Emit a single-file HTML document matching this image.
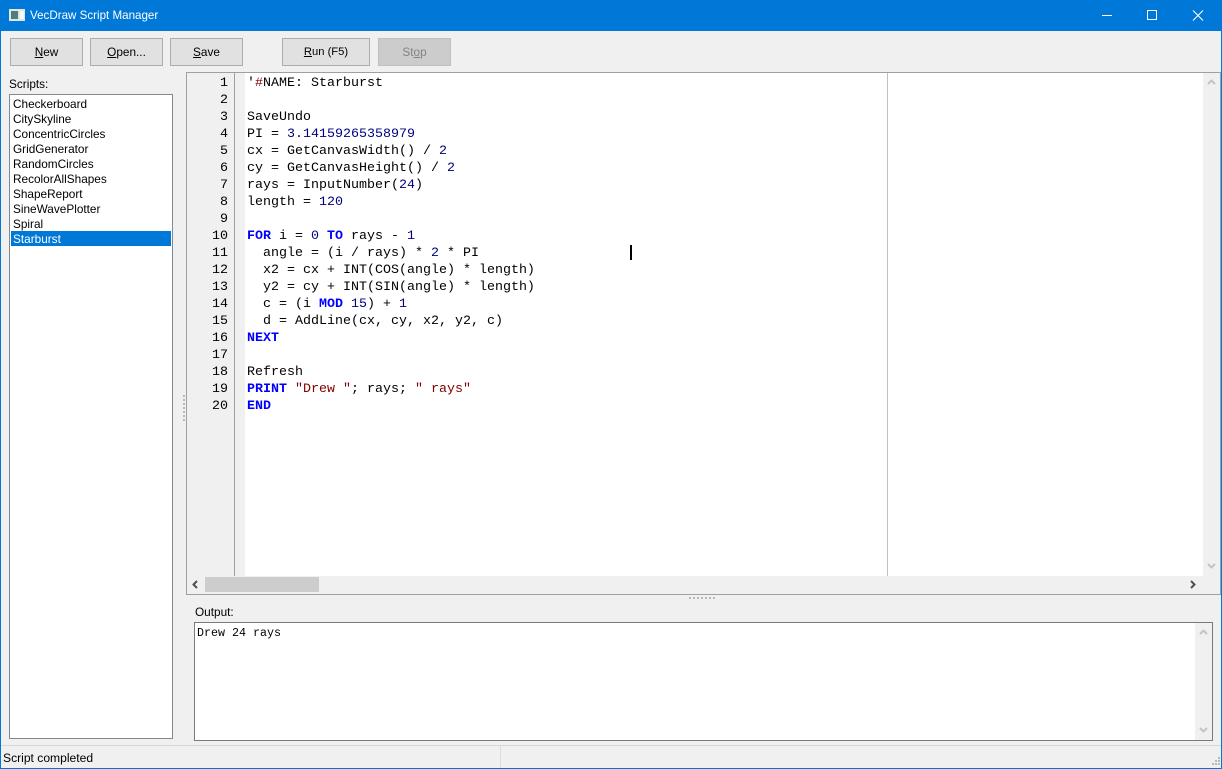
<!DOCTYPE html>
<html><head><meta charset="utf-8"><title>VecDraw Script Manager</title>
<style>
html,body{margin:0;padding:0;background:#f0f0f0;}
body{width:1222px;height:769px;position:relative;overflow:hidden;font-family:"Liberation Sans",sans-serif;font-size:12px;color:#000;}
.a{position:absolute;}
.t{position:absolute;white-space:pre;line-height:15px;}
.btn{position:absolute;top:38px;height:26px;border:1px solid #adadad;background:#e1e1e1;text-align:center;line-height:26px;font-size:11.8px;box-sizing:content-box;}
.btn u{text-decoration:underline;}
.code{position:absolute;white-space:pre;font-family:"Liberation Mono",monospace;font-size:13.33px;line-height:17px;}
.k{color:#0000ff;font-weight:bold}.n{color:#000080}.s{color:#800000}.c{color:#800000}
.ln{position:absolute;left:187px;width:41px;text-align:right;white-space:pre;font-family:"Liberation Mono",monospace;font-size:13.33px;line-height:17px;}
.li{position:absolute;left:13px;line-height:15px;font-size:11.8px;white-space:pre;}
</style></head><body>
<div class="a" style="left:0;top:0;width:1222px;height:31px;background:#0078d7"></div>
<div class="a" style="left:0;top:0;width:1px;height:769px;background:#0078d7"></div>
<div class="a" style="left:1221px;top:0;width:1px;height:769px;background:#0078d7"></div>
<div class="a" style="left:0;top:768px;width:1222px;height:1px;background:#0078d7"></div>
<svg class="a" style="left:9px;top:9px" width="16" height="12"><rect x="0" y="0" width="16" height="12" fill="#dfe6e6"/><rect x="2" y="2" width="7" height="8" fill="#4f7f78"/><rect x="11" y="2" width="4" height="8" fill="#f8f8f8"/></svg>
<div class="t" style="left:30px;top:8px;color:#fff;font-size:11.6px">VecDraw Script Manager</div>
<svg class="a" style="left:1080px;top:0" width="142" height="31" fill="none" stroke="#fff" stroke-width="1"><path d="M22 15.5H32"/><rect x="67.5" y="10.5" width="9" height="9"/><path d="M113 10.5L123 20.5M123 10.5L113 20.5" stroke-width="1.1"/></svg>

<div class="btn" style="left:10px;width:71px"><u>N</u>ew</div>
<div class="btn" style="left:90px;width:71px"><u>O</u>pen...</div>
<div class="btn" style="left:170px;width:71px"><u>S</u>ave</div>
<div class="btn" style="left:282px;width:86px;font-size:11.2px"><u>R</u>un (F5)</div>
<div class="btn" style="left:378px;width:71px;background:#cccccc;border-color:#bfbfbf;color:#838383">St<u>o</u>p</div>

<div class="t" style="left:9px;top:77px;font-size:11.8px">Scripts:</div>
<div class="a" style="left:9px;top:94px;width:162px;height:643px;background:#fff;border:1px solid #828790"></div>
<div class="li" style="top:97px">Checkerboard</div>
<div class="li" style="top:112px">CitySkyline</div>
<div class="li" style="top:127px">ConcentricCircles</div>
<div class="li" style="top:142px">GridGenerator</div>
<div class="li" style="top:157px">RandomCircles</div>
<div class="li" style="top:172px">RecolorAllShapes</div>
<div class="li" style="top:187px">ShapeReport</div>
<div class="li" style="top:202px">SineWavePlotter</div>
<div class="li" style="top:217px">Spiral</div>
<div class="a" style="left:11px;top:231px;width:160px;height:15px;background:#0078d7"></div>
<div class="li" style="top:232px;color:#fff">Starburst</div>

<svg class="a" style="left:183px;top:394px" width="3" height="30" fill="#b8b8b8"><rect x="0" y="1" width="2" height="2"/><rect x="0" y="5" width="2" height="2"/><rect x="0" y="9" width="2" height="2"/><rect x="0" y="13" width="2" height="2"/><rect x="0" y="17" width="2" height="2"/><rect x="0" y="21" width="2" height="2"/><rect x="0" y="25" width="2" height="2"/></svg>

<div class="a" style="left:186px;top:72px;width:1033px;height:521px;border:1px solid #a0a0a0;background:#fff;box-sizing:content-box"></div>
<div class="a" style="left:187px;top:73px;width:47px;height:503px;background:#f0f0f0"></div>
<div class="a" style="left:234px;top:73px;width:1px;height:503px;background:#a0a0a0"></div>
<div class="a" style="left:235px;top:73px;width:10px;height:503px;background:#f0f0f0"></div>
<div class="a" style="left:887px;top:73px;width:1px;height:503px;background:#c0c0c0"></div>

<div class="ln" style="top:74.5px">1
2
3
4
5
6
7
8
9
10
11
12
13
14
15
16
17
18
19
20</div>
<div class="code" style="left:247px;top:75px"><span>'</span><span class="c">#</span>NAME: Starburst

SaveUndo
PI = <span class="n">3.14159265358979</span>
cx = GetCanvasWidth() / <span class="n">2</span>
cy = GetCanvasHeight() / <span class="n">2</span>
rays = InputNumber(<span class="n">24</span>)
length = <span class="n">120</span>

<span class="k">FOR</span> i = <span class="n">0</span> <span class="k">TO</span> rays - <span class="n">1</span>
  angle = (i / rays) * <span class="n">2</span> * PI
  x2 = cx + INT(COS(angle) * length)
  y2 = cy + INT(SIN(angle) * length)
  c = (i <span class="k">MOD</span> <span class="n">15</span>) + <span class="n">1</span>
  d = AddLine(cx, cy, x2, y2, c)
<span class="k">NEXT</span>

Refresh
<span class="k">PRINT</span> <span class="s">"Drew "</span>; rays; <span class="s">" rays"</span>
<span class="k">END</span></div>
<div class="a" style="left:630px;top:245px;width:2px;height:15px;background:#000"></div>

<div class="a" style="left:1203px;top:73px;width:17px;height:503px;background:#f0f0f0"></div>
<svg class="a" style="left:1203px;top:73px" width="17" height="503" fill="none" stroke="#c4c4c4" stroke-width="2"><path d="M5 11L8.5 7.5L12 11"/><path d="M5 491L8.5 494.5L12 491"/></svg>
<div class="a" style="left:187px;top:576px;width:1033px;height:18px;background:#f0f0f0"></div>
<div class="a" style="left:205px;top:577px;width:114px;height:15px;background:#cdcdcd"></div>
<svg class="a" style="left:187px;top:576px" width="1033" height="18" fill="none" stroke="#505050" stroke-width="2"><path d="M10 5L6.5 8.5L10 12"/><path d="M1004 5L1007.5 8.5L1004 12"/></svg>

<svg class="a" style="left:688px;top:597px" width="32" height="3" fill="#b8b8b8"><rect x="1" y="0" width="2" height="2"/><rect x="5" y="0" width="2" height="2"/><rect x="9" y="0" width="2" height="2"/><rect x="13" y="0" width="2" height="2"/><rect x="17" y="0" width="2" height="2"/><rect x="21" y="0" width="2" height="2"/><rect x="25" y="0" width="2" height="2"/></svg>

<div class="t" style="left:195px;top:605px;font-size:11.8px">Output:</div>
<div class="a" style="left:194px;top:622px;width:1017px;height:117px;border:1px solid #7a7a7a;background:#fff"></div>
<div class="code" style="left:197px;top:625px;font-size:11.67px">Drew 24 rays</div>
<div class="a" style="left:1195px;top:623px;width:17px;height:117px;background:#f0f0f0"></div>
<svg class="a" style="left:1195px;top:623px" width="17" height="117" fill="none" stroke="#c4c4c4" stroke-width="2"><path d="M5 11L8.5 7.5L12 11"/><path d="M5 105L8.5 108.5L12 105"/></svg>

<div class="a" style="left:1px;top:745px;width:1220px;height:1px;background:#d7d7d7"></div>
<div class="a" style="left:500px;top:746px;width:1px;height:22px;background:#dcdcdc"></div>
<div class="t" style="left:3px;top:751px;font-size:12.1px">Script completed</div>
<svg class="a" style="left:1211px;top:757px" width="10" height="10" fill="#b8b8b8"><rect x="7" y="0" width="2" height="2"/><rect x="4" y="3" width="2" height="2"/><rect x="7" y="3" width="2" height="2"/><rect x="1" y="6" width="2" height="2"/><rect x="4" y="6" width="2" height="2"/><rect x="7" y="6" width="2" height="2"/></svg>
</body></html>
